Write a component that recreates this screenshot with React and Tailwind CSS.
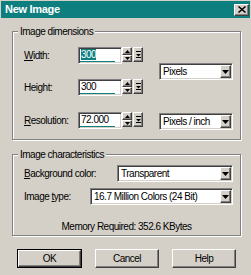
import React from 'react';

// classic win9x bevels
const raised =
  'border border-t-white border-l-white border-r-[#404040] border-b-[#404040] shadow-[inset_-1px_-1px_0_#808080] bg-[#d4d0c8]';
const sunken =
  'border border-t-[#808080] border-l-[#808080] border-r-white border-b-white shadow-[inset_1px_1px_0_#404040,inset_-1px_-1px_0_#d4d0c8] bg-white';

const DownTri = () => (
  <svg width="7" height="4" viewBox="0 0 7 4">
    <path d="M0 0h7L3.5 4z" fill="#000" />
  </svg>
);

const UpTri = () => (
  <svg width="5" height="3" viewBox="0 0 5 3">
    <path d="M0 3h5L2.5 0z" fill="#000" />
  </svg>
);

const Combo = ({ value, className }) => (
  <div className={`${sunken} ${className} h-[17px] p-[1px] flex items-stretch`}>
    <span className="flex-1 pl-[2px] leading-[13px] whitespace-nowrap overflow-hidden">{value}</span>
    <div className={`${raised} w-[11px] flex items-center justify-center`}>
      <DownTri />
    </div>
  </div>
);

const SpinField = ({ value, selected }) => (
  <div className="flex items-start">
    <div className={`${sunken} w-[44px] h-[17px] p-[1px] flex flex-col`}>
      <div className="flex-1 pl-[1px] leading-[12px]">
        {selected ? <span className="bg-[#0e7f7f] text-white">{value}</span> : value}
      </div>
      <div className="h-[2px] w-[35px] bg-[#0e7f7f]" />
    </div>
    <div className="flex flex-col w-[10px] h-[15px]">
      <div className={`${raised} h-[8px] flex items-center justify-center`}>
        <UpTri />
      </div>
      <div className={`${raised} h-[7px] flex items-center justify-center`}>
        <svg width="5" height="3" viewBox="0 0 5 3">
          <path d="M0 0h5L2.5 3z" fill="#000" />
        </svg>
      </div>
    </div>
    <div className={`${raised} ml-[1px] w-[10px] h-[15px] flex items-center justify-center`}>
      <svg width="5" height="9" viewBox="0 0 5 9">
        <rect x="0" y="1" width="5" height="1" fill="#000" />
        <path d="M0 4h5L2.5 6.5z" fill="#000" />
        <rect x="0" y="7" width="5" height="1" fill="#000" />
      </svg>
    </div>
  </div>
);

const Group = ({ title, className, children }) => (
  <fieldset
    className={`border border-[#808080] shadow-[1px_1px_0_#fff,inset_1px_1px_0_#fff] ml-[11px] w-[229px] ${className}`}
  >
    <legend className="ml-[5px] px-[2px] leading-[13px] bg-[#d4d0c8]">{title}</legend>
    {children}
  </fieldset>
);

const Button = ({ children, isDefault }) =>
  isDefault ? (
    <div className="border border-black w-[65px] h-[19px]">
      <div className={`${raised} h-full flex items-center justify-center`}>{children}</div>
    </div>
  ) : (
    <div className={`${raised} w-[64px] h-[19px] flex items-center justify-center`}>{children}</div>
  );

export default function App() {
  return (
    <div className="w-[251px] h-[275px] bg-[#d4d0c8] p-[1px] overflow-hidden font-['Liberation_Sans',Arial,sans-serif] text-[10px] tracking-[-0.5px] text-black">
      {/* title bar */}
      <div className="h-[17px] bg-[#0e7f7f] flex items-center justify-between pl-[4px] pr-[1px]">
        <span className="text-white font-bold text-[11px] tracking-[-0.3px]">New Image</span>
        <div className={`${raised} w-[15px] h-[12px] flex items-center justify-center`}>
          <svg width="8" height="7" viewBox="0 0 8 7">
            <path d="M0.5 0.5l7 6M7.5 0.5l-7 6" stroke="#000" strokeWidth="1.5" />
          </svg>
        </div>
      </div>

      <Group title="Image dimensions" className="mt-[7px]">
        <div className="flex pl-[11px] pt-[9px] h-[101px]">
          <div className="flex flex-col">
            <div className="flex items-center h-[17px]">
              <span className="w-[54px]"><span className="underline">W</span>idth:</span>
              <SpinField value="300" selected />
            </div>
            <div className="flex items-center h-[17px] mt-[15px]">
              <span className="w-[54px]">Height:</span>
              <SpinField value="300" />
            </div>
            <div className="flex items-center h-[17px] mt-[16px]">
              <span className="w-[54px]"><span className="underline">R</span>esolution:</span>
              <SpinField value="72.000" />
            </div>
          </div>
          <div className="flex flex-col ml-[16px] pt-[16px]">
            <Combo value="Pixels" className="w-[74px]" />
            <Combo value="Pixels / inch" className="w-[74px] mt-[33px]" />
          </div>
        </div>
      </Group>

      <Group title="Image characteristics" className="mt-[8px]">
        <div className="flex flex-col pl-[11px] pt-[4px] pb-[2px]">
          <div className="flex items-center h-[17px]">
            <span className="w-[93px]"><span className="underline">B</span>ackground color:</span>
            <Combo value="Transparent" className="w-[116px]" />
          </div>
          <div className="flex items-center h-[17px] mt-[6px]">
            <span className="w-[66px]">Image <span className="underline">t</span>ype:</span>
            <Combo value="16.7 Million Colors (24 Bit)" className="w-[143px]" />
          </div>
          <div className="mt-[15px] h-[13px] leading-[13px] text-center pr-[11px]">
            Memory Required: 352.6 KBytes
          </div>
        </div>
      </Group>

      <div className="flex mt-[13px] pl-[16px]">
        <Button isDefault>OK</Button>
        <div className="ml-[13px]"><Button>Cancel</Button></div>
        <div className="ml-[13px]"><Button>Help</Button></div>
      </div>
    </div>
  );
}
